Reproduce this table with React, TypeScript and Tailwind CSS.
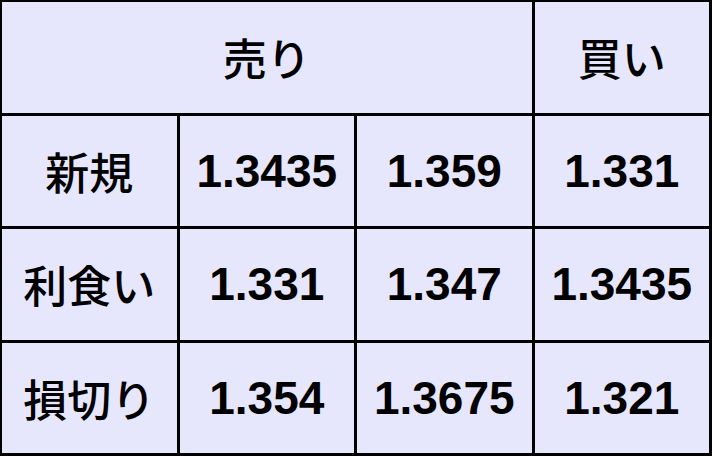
const rows = [
  { label: '新規', values: ['1.3435', '1.359', '1.331'] },
  { label: '利食い', values: ['1.331', '1.347', '1.3435'] },
  { label: '損切り', values: ['1.354', '1.3675', '1.321'] },
];

const cell = 'flex items-center justify-center bg-[#e6e6fc] text-black leading-none';
const jp = `${cell} text-[44px] font-medium font-['Noto_Sans_CJK_JP',sans-serif]`;
const num = `${cell} text-[46px] font-bold font-['Liberation_Sans',Arial,sans-serif]`;

export default function App() {
  return (
    <div className="w-[712px] h-[456px] bg-black pt-[2px] pl-[2px] pr-[3px] pb-[3px]">
      <div className="grid h-full w-full grid-cols-4 grid-rows-4 gap-[3px]">
        <div className={`${jp} col-span-3`}>売り</div>
        <div className={jp}>買い</div>
        {rows.map((row) => [
          <div key={row.label} className={jp}>
            {row.label}
          </div>,
          ...row.values.map((v, i) => (
            <div key={row.label + i} className={num}>
              {v}
            </div>
          )),
        ])}
      </div>
    </div>
  );
}
